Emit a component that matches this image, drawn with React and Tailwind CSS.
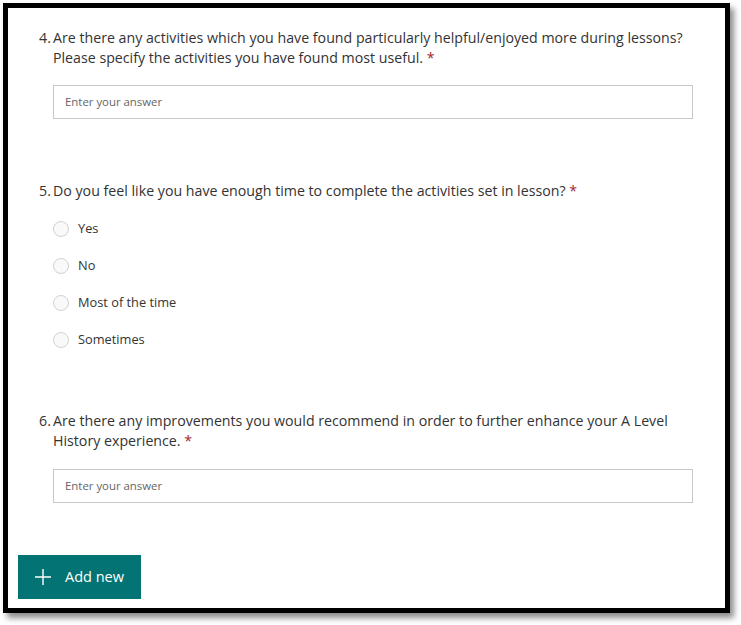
import React from "react";

function Radio({ label }) {
  return (
    <div className="flex h-[37px] items-center">
      <span className="ml-[14px] block h-[16px] w-[16px] rounded-full border border-[#d2d2d2] bg-[#f9f9f9]" />
      <span className="ml-[9px] text-[12.8px] text-[#333333]">{label}</span>
    </div>
  );
}

function Question({ num, children }) {
  return (
    <div className="flex w-[654px] text-[14.2px] leading-[20px] text-[#333333]">
      <span className="w-[14px] shrink-0">{num}.</span>
      <span className="w-[640px]">
        {children} <span className="text-[#a4262c]">*</span>
      </span>
    </div>
  );
}

function AnswerBox() {
  return (
    <div className="ml-[14px] flex h-[34px] w-[640px] items-center border border-[#c8c8c8] pl-[11px] text-[11.4px] text-[#666666]">
      Enter your answer
    </div>
  );
}

export default function App() {
  return (
    <div className="h-[625px] w-[741px] bg-white" style={{ fontFamily: "'Open Sans', 'Noto Sans', sans-serif" }}>
      <div className="ml-[3px] pt-[3px]">
        <div className="h-[610px] w-[727px] border-[5px] border-black bg-white shadow-[4px_5px_6px_rgba(0,0,0,0.45)]">
          <div className="pl-[31px] pt-[20px] pr-[20px]">
            <Question num={4}>
              Are there any activities which you have found particularly helpful/enjoyed more during lessons? Please specify the activities you have found most useful.
            </Question>
            <div className="mt-[17px]">
              <AnswerBox />
            </div>
            <div className="mt-[62px]">
              <Question num={5}>Do you feel like you have enough time to complete the activities set in lesson?</Question>
            </div>
            <div className="mt-[9px]">
              <Radio label="Yes" />
              <Radio label="No" />
              <Radio label="Most of the time" />
              <Radio label="Sometimes" />
            </div>
            <div className="mt-[53px]">
              <Question num={6}>
                Are there any improvements you would recommend in order to further enhance your A Level History experience.
              </Question>
            </div>
            <div className="mt-[18px]">
              <AnswerBox />
            </div>
          </div>
          <div className="ml-[10px] mt-[52px] flex h-[44px] w-[123px] items-center bg-[#037473] text-white">
            <svg width="16" height="16" viewBox="0 0 16 16" className="ml-[17px]">
              <path d="M8 0V16M0 8H16" stroke="white" strokeWidth="1.4" />
            </svg>
            <span className="ml-[14px] text-[14.5px]">Add new</span>
          </div>
        </div>
      </div>
    </div>
  );
}
